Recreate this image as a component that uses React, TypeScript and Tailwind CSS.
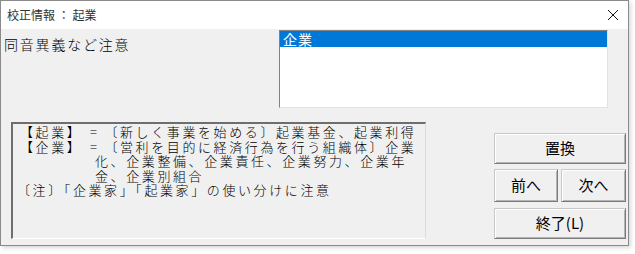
const jp = "font-['Noto_Sans_CJK_JP',sans-serif]";

const Btn = ({ label, className = '' }: { label: string; className?: string }) => (
  <button
    className={`flex items-center justify-center border border-t-[#c8c8c8] border-l-[#c8c8c8] border-b-[#7a7a7a] border-r-[#7a7a7a] bg-[#f0f0f0] text-[15px] text-black shadow-[inset_1px_1px_0_#ffffff,inset_-1px_-1px_0_#b4b4b4] ${className}`}
  >
    {label}
  </button>
);

const Eq = () => <span className="inline-block w-[22px] text-center tracking-normal">=</span>;

export default function App() {
  return (
    <div className={`h-[254px] w-[635px] bg-white ${jp}`}>
      <div className="flex h-[246px] w-[629px] flex-col border border-[#8a8a8a] bg-[#f0f0f0] shadow-[2px_2px_4px_rgba(0,0,0,0.15)]">
        {/* Title bar */}
        <div className="flex h-[28px] items-center justify-between bg-white pl-[6px] pr-[9px]">
          <span className="text-[12px] text-[#333]">校正情報 ： 起業</span>
          <svg width="12" height="12" viewBox="0 0 12 12" className="mb-[1px]">
            <path d="M1 1L11 11M11 1L1 11" stroke="#111" strokeWidth="1" />
          </svg>
        </div>

        {/* Body */}
        <div className="flex flex-1 flex-col">
          <div className="flex pt-[1px]">
            <div className="flex-1 pl-[3px] pt-[6px] text-[14px] font-light leading-[16px] tracking-[1.8px] text-black">
              同音異義など注意
            </div>
            <div className="mr-[20px] h-[78px] w-[329px] border border-t-[#828282] border-l-[#828282] border-b-[#e3e3e3] border-r-[#e3e3e3] bg-white">
              <div className="h-[16px] bg-[#0078d7] pl-[3px] text-[14px] leading-[16px] tracking-[1px] text-white">
                企業
              </div>
            </div>
          </div>

          <div className="mt-[14px] flex">
            <div className="ml-[10px] h-[117px] w-[415px] border-l-2 border-t-2 border-b border-r border-l-[#6e6e6e] border-t-[#6e6e6e] border-b-white border-r-[#dcdcdc] bg-[#f0f0f0] pl-[7px] pt-[1px] text-[13px] font-light leading-[14.5px] tracking-[2.6px] text-black">
              <div>
                【起業】<Eq />〔新しく事業を始める〕起業基金、起業利得
              </div>
              <div>
                【企業】<Eq />〔営利を目的に経済行為を行う組織体〕企業
              </div>
              <div className="pl-[75px]">化、企業整備、企業責任、企業努力、企業年</div>
              <div className="pl-[75px]">金、企業別組合</div>
              <div className="-ml-[3px]">〔注〕「企業家」「起業家」の使い分けに注意</div>
            </div>

            <div className="ml-[68px] mt-[11px] flex w-[132px] flex-col">
              <Btn label="置換" className="h-[31px] w-full border-[#6a6a6a]" />
              <div className="mt-[5px] flex gap-[3px]">
                <Btn label="前へ" className="h-[33px] w-[64px]" />
                <Btn label="次へ" className="h-[33px] flex-1" />
              </div>
              <Btn label="終了(L)" className="mt-[6px] h-[31px] w-full" />
            </div>
          </div>
        </div>
      </div>
    </div>
  );
}
